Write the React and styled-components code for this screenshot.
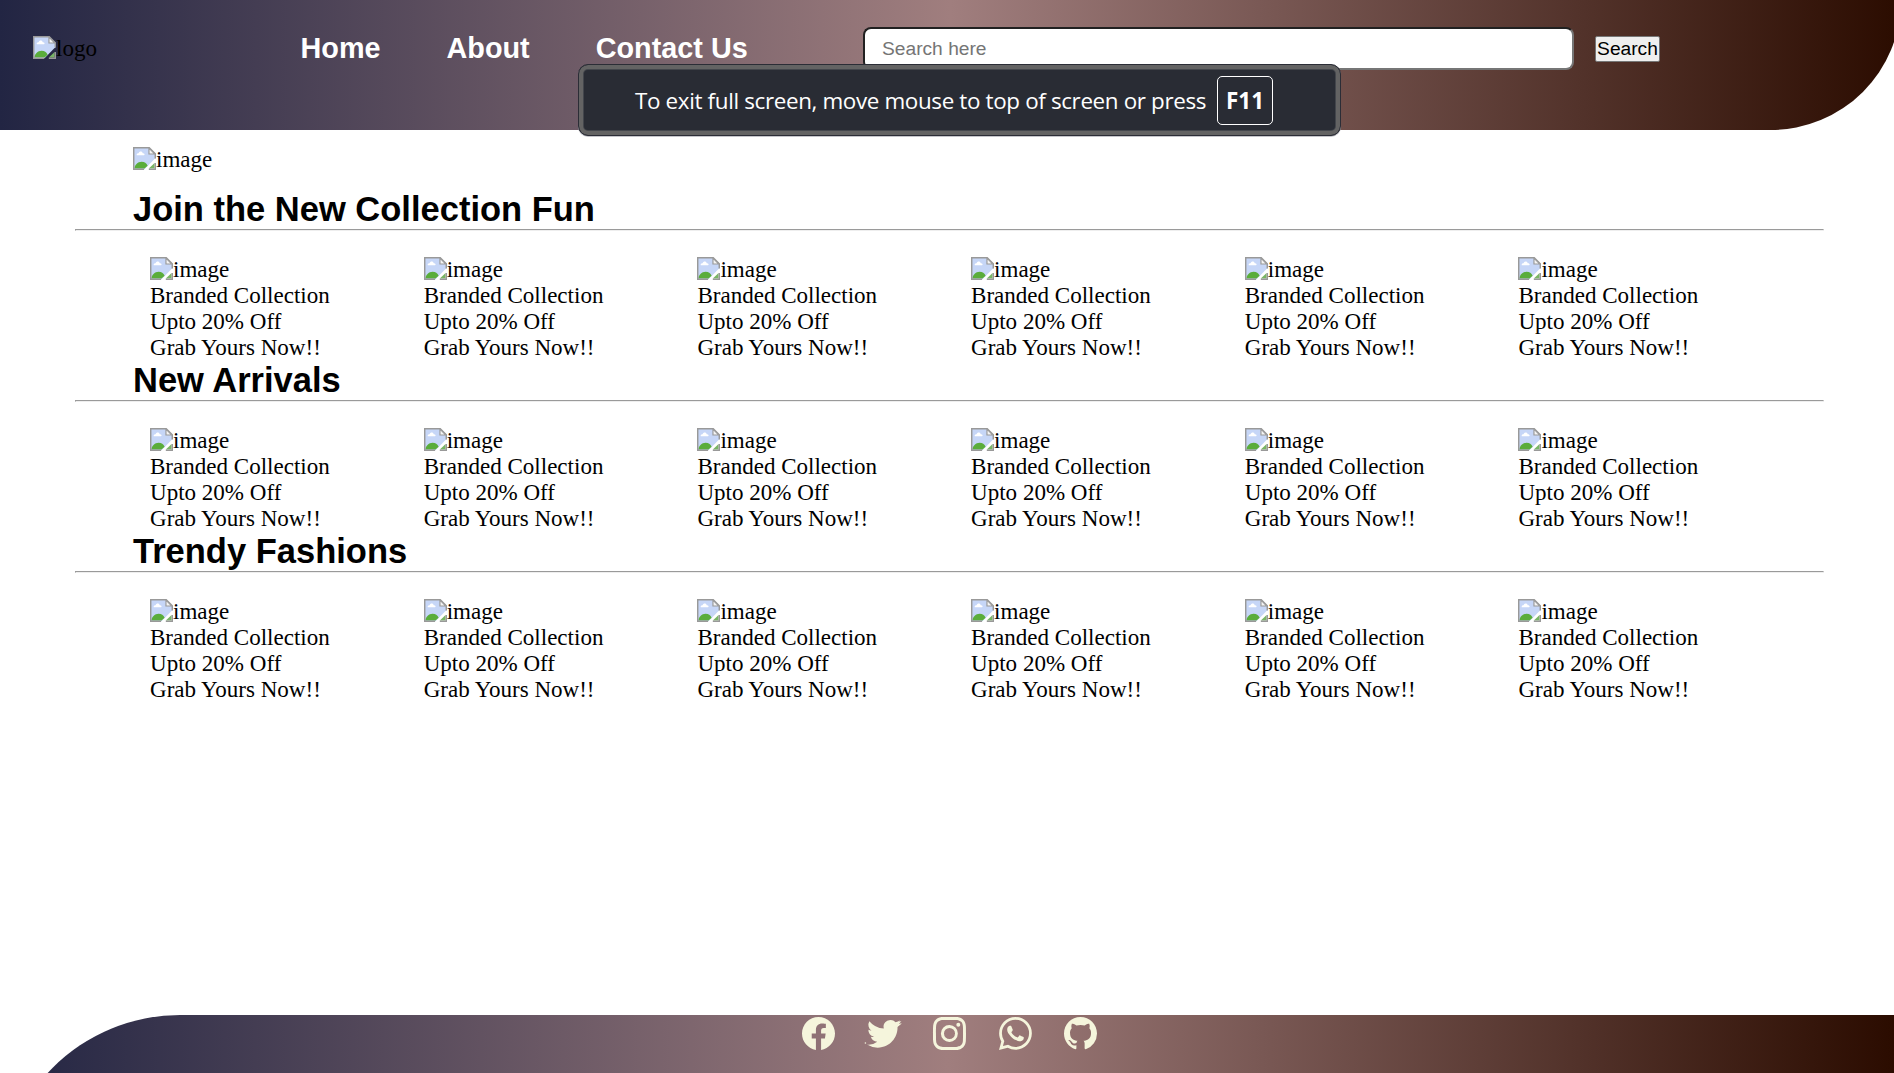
import React from "react";
import styled, { createGlobalStyle } from "styled-components";
import { BsFacebook, BsTwitter, BsInstagram, BsWhatsapp, BsGithub } from "react-icons/bs";

const GlobalStyle = createGlobalStyle`
  * { box-sizing: border-box; margin: 0; padding: 0; }
  body {
    font-family: "Liberation Serif", "Times New Roman", serif;
    font-size: 23.04px;
    line-height: 26px;
    color: #000;
    background: #fff;
    overflow: hidden;
  }
`;

const gradient = "linear-gradient(to right, #222543, #a07e7e 50%, #2b0c00)";

const Page = styled.div`
  display: flex;
  flex-direction: column;
  height: 1073px;
  overflow: hidden;
`;

const Header = styled.header`
  display: flex;
  align-items: flex-start;
  width: 1901px;
  height: 130px;
  flex: none;
  padding: 27px 0 0 33px;
  background: ${gradient};
  border-bottom-right-radius: 130px;
`;

const Logo = styled.div`
  width: 267.5px;
  padding-top: 8px;
`;

const Nav = styled.nav`
  display: flex;
  gap: 66px;
  width: 562.5px;
  padding-top: 5px;
`;

const NavLink = styled.a`
  font: bold 28.8px/33px "Liberation Sans", Arial, sans-serif;
  color: #fff;
  white-space: nowrap;
`;

const SearchInput = styled.input`
  flex: none;
  width: 711px;
  height: 43px;
  padding: 0 17px;
  border: 2px inset #767676;
  border-radius: 8px;
  background: #fff;
  font: 19.2px "Liberation Sans", Arial, sans-serif;
  &::placeholder { color: #757575; }
`;

const SearchButton = styled.button`
  flex: none;
  width: 65px;
  height: 26px;
  margin: 9px 0 0 21px;
  border: 1px solid #767676;
  border-radius: 2px;
  background: #efefef;
  color: #000;
  font: 19.2px/22px "Liberation Sans", Arial, sans-serif;
  white-space: nowrap;
`;

const Notice = styled.div`
  position: absolute;
  left: 578px;
  top: 64px;
  display: flex;
  align-items: center;
  gap: 11px;
  width: 763px;
  height: 72px;
  padding-left: 56px;
  border: 1px solid #2b2d36;
  border-radius: 10px;
  background: #292c34;
  box-shadow: inset 0 0 0 4px #636363, inset 0 0 0 5px #43464c, 0 1px 0 #c5c5ca;
  color: #fff;
  font: 22.4px/30px "Open Sans", "Noto Sans", sans-serif;
  white-space: nowrap;
`;

const NoticeText = styled.span`
  width: 571px;
  padding-top: 2px;
  letter-spacing: -0.35px;
`;

const Key = styled.kbd`
  display: flex;
  align-items: center;
  justify-content: center;
  width: 56px;
  height: 49px;
  padding-top: 2px;
  border: 1px solid #fff;
  border-radius: 5px;
  font: bold 22.4px/30px "Open Sans", "Noto Sans", sans-serif;
`;

const Main = styled.main`
  flex: 1;
  padding: 16px 70px 0 75px;
`;

const Banner = styled.div`
  padding-left: 58px;
  margin-bottom: 15px;
`;

const Missing = styled.div`
  display: flex;
  height: 26px;
  svg { flex: none; margin-top: 1px; }
`;

const SectionTitle = styled.h2`
  height: 42px;
  padding: 2px 0 0 58px;
  font: bold 34.5px/40px "Liberation Sans", Arial, sans-serif;
`;

const Rule = styled.hr`
  height: 2px;
  border: 1px solid;
  border-color: #9a9a9a #eee #eee #9a9a9a;
`;

const Products = styled.div`
  display: grid;
  grid-template-columns: repeat(6, 273.7px);
  padding: 25px 0 0 75px;
`;

const Product = styled.article`
  height: 102px;
  white-space: nowrap;
`;

const FooterClip = styled.div`
  flex: none;
  height: 58px;
  overflow: hidden;
`;

const Footer = styled.footer`
  display: flex;
  justify-content: center;
  align-items: flex-start;
  gap: 32.6px;
  height: 187px;
  padding: 2px 0 0 5px;
  background: ${gradient};
  border-top-left-radius: 180px;
  color: beige;
  svg { overflow: visible; }
`;

function BrokenImage({ alt }) {
  return (
    <Missing>
      <svg width="23" height="23" viewBox="0 0 16 16" role="img" aria-label={alt}>
        <path d="M.5.5h10.8l4.2 4.2v3.2L8 15.5H.5z" fill="#c6d6f7" />
        <path d="M2.6 5.8c-.3-1 .6-1.6 1.3-1.4.3-1.6 2.5-1.7 2.9-.1 1.2-.1 1.7 1 .9 1.5z" fill="#fff" />
        <path d="M1 15c0-2.4 2.2-4.8 5-4.8 2 0 3.4 1 4.2 2.8L8 15z" fill="#5aad3b" />
        <path d="m11 15 4-3.8V15z" fill="#79b565" />
        <path d="M15.5 8V4.7L11.3.5H.5v15h7.2M11 15.5h4.5v-4.4" fill="none" stroke="#999" />
        <path d="M11.1.8v4.1h4.1z" fill="#f4f4f4" stroke="#999" strokeWidth=".8" />
      </svg>
      <span>{alt}</span>
    </Missing>
  );
}

function TwitterBird() {
  return (
    <svg width="33" height="33" viewBox="0 0 33 33" fill="currentColor">
      <BsTwitter y="-1.2" size={34} />
      <circle cx="-1.6" cy="26" r=".8" />
      <path d="m30 5.5 4.4-1.6-2.6 3.2 3.2-.6-4.6 3z" />
    </svg>
  );
}

const sections = ["Join the New Collection Fun", "New Arrivals", "Trendy Fashions"];

export default function App() {
  return (
    <Page>
      <GlobalStyle />
      <Header>
        <Logo><BrokenImage alt="logo" /></Logo>
        <Nav>
          <NavLink>Home</NavLink>
          <NavLink>About</NavLink>
          <NavLink>Contact Us</NavLink>
        </Nav>
        <SearchInput placeholder="Search here" />
        <SearchButton>Search</SearchButton>
      </Header>
      <Main>
        <Banner><BrokenImage alt="image" /></Banner>
        {sections.map((title) => (
          <section key={title}>
            <SectionTitle>{title}</SectionTitle>
            <Rule />
            <Products>
              {Array.from({ length: 6 }, (_, i) => (
                <Product key={i}>
                  <BrokenImage alt="image" />
                  <p>Branded Collection</p>
                  <p>Upto 20% Off</p>
                  <p>Grab Yours Now!!</p>
                </Product>
              ))}
            </Products>
          </section>
        ))}
      </Main>
      <FooterClip>
        <Footer>
          <BsFacebook size={33} />
          <TwitterBird />
          <BsInstagram size={33} />
          <BsWhatsapp size={33} />
          <BsGithub size={33} />
        </Footer>
      </FooterClip>
      <Notice>
        <NoticeText>To exit full screen, move mouse to top of screen or press</NoticeText>
        <Key>F11</Key>
      </Notice>
    </Page>
  );
}
